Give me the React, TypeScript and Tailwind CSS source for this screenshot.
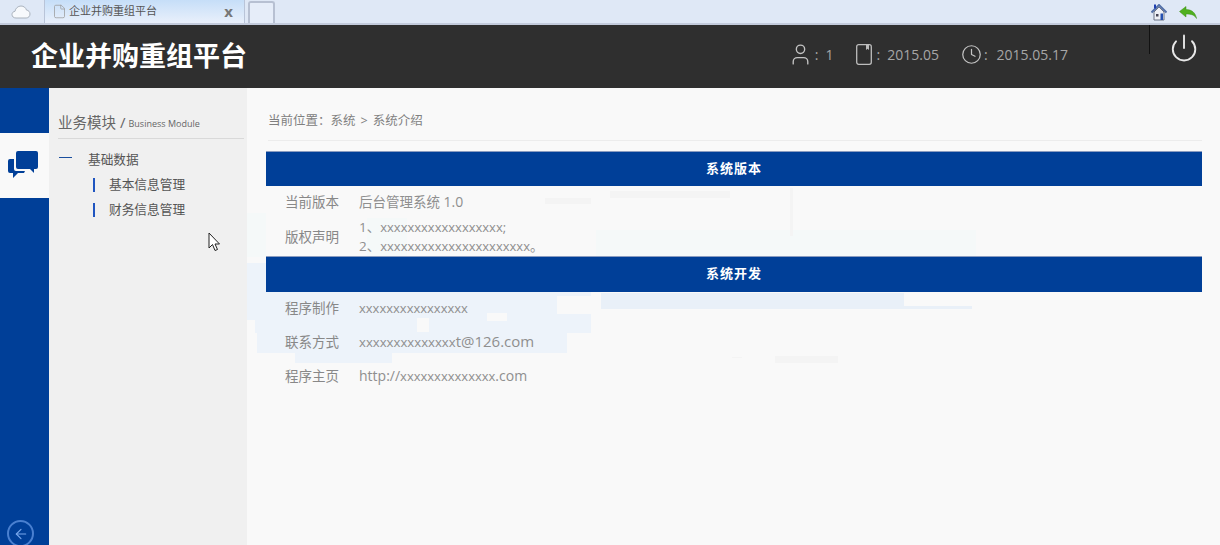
import { ArrowLeft, Clock, File, Power, User } from "lucide-react";

const font = "font-['Open_Sans','Noto_Sans_CJK_SC',sans-serif]";

const Row = ({ label, children, h = "h-[34px]" }: { label: string; children: React.ReactNode; h?: string }) => (
	<div className={`flex items-center pb-[2px] text-[13.500px] leading-[19px] text-[#8f8f8f] ${h}`}>
		<div className="w-[73px] pl-[19px] text-[#888]">{label}</div>
		<div className="ml-[20px]">{children}</div>
	</div>
);

const Banner = ({ title, h = "h-[35px]" }: { title: string; h?: string }) => (
	<div className={`flex items-center justify-center border-t border-[#8a9cc0] bg-[#003f98] text-[13px] font-bold tracking-[1px] text-white ${h}`}>
		{title}
	</div>
);

const Cloud = () => (
	<svg width="20" height="14" viewBox="0 0 20 14" className="text-[#aab2bd]">
		<path
			d="M5 13C2.500 13 1 11.500 1 9.500 1 7.700 2.400 6.400 4 6.300 4.500 3.200 7 1 10 1c2.700 0 4.800 1.700 5.500 4.100 2 .1 3.500 1.900 3.500 3.900 0 2.200-1.600 4-3.800 4z"
			fill="#f7f9fc"
			stroke="currentColor"
		/>
	</svg>
);

const House = () => (
	<svg width="16" height="17" viewBox="0 0 16 17">
		<path d="M3 8v8h10V8L8 3z" fill="#eef0f6" stroke="#6d7486" />
		<path d="M0.500 8.500 8 1l7.500 7.500" fill="none" stroke="#5470a8" strokeWidth="2" />
		<rect x="3" y="0.500" width="2" height="4" fill="#1f3fb0" />
		<rect x="5" y="10" width="2.500" height="2.500" fill="#445" />
		<rect x="9.500" y="9.500" width="2.500" height="6.500" fill="#2450b0" />
	</svg>
);

const GreenArrow = () => (
	<svg width="18" height="13" viewBox="0 0 18 13">
		<path d="M0.500 5.500 7 0.500v3c5.500 0 9.500 3 10.500 9-2-3.500-5-4.500-10.500-4.500v3z" fill="#4fb01f" stroke="#3c8f16" strokeWidth="0.500" />
	</svg>
);

const Chat = () => (
	<svg width="30" height="27" viewBox="0 0 30 27" fill="#003f98">
		<path d="M8 2Q8 0 10 0h18q2 0 2 2v14q0 2-2 2h-2v4l-4-4H10q-2 0-2-2z" />
		<path d="M6 8H2Q0 8 0 10V20Q0 22 2 22H5V27L10 22H16L17 20H8Q6 20 6 18Z" />
	</svg>
);

const Notebook = () => (
	<svg width="16" height="21" viewBox="0 0 16 21" fill="none" stroke="#bdbdbd" strokeWidth="1.300">
		<rect x="0.700" y="0.700" width="14.600" height="19.600" rx="2" />
		<path d="M10 1v5l1.500-1.200L13 6V1" fill="#bdbdbd" stroke="none" />
	</svg>
);

// pale remains of an earlier frame, left in the capture
const Ghosting = () => (
	<svg width="973" height="457" viewBox="0 0 973 457" className="absolute left-0 top-0">
		<g fill="#edf3fa">
			<path d="M0 175h344v70H320v20H145v10H48v-10H10v-20H0z" />
		</g>
		<path d="M354 205h303v13h68v3H354z" fill="#e9f0f8" />
		<g fill="#f9f9f9">
			<rect x="310" y="208" width="34" height="18" />
			<rect x="0" y="232" width="8" height="20" />
			<rect x="240" y="225" width="20" height="8" />
			<rect x="170" y="230" width="12" height="14" />
		</g>
		<g fill="#f5f9f9">
			<rect x="0" y="125" width="19" height="44" />
			<rect x="349" y="142" width="380" height="27" />
			<rect x="120" y="130" width="40" height="39" />
		</g>
		<g fill="#f4f4f4">
			<rect x="363" y="103" width="120" height="7" />
			<rect x="298" y="110" width="46" height="6" />
			<rect x="543" y="100" width="3" height="48" />
			<rect x="485" y="269" width="10" height="1" />
			<rect x="528" y="268" width="63" height="7" />
		</g>
	</svg>
);

export default function App() {
	return (
		<div className={`relative flex h-[545px] w-[1220px] flex-col overflow-hidden bg-[#f9f9f9] ${font}`}>
			{/* browser tab strip */}
			<div className="flex h-[25px] shrink-0 items-end border-b-2 border-[#c3cbdc] bg-[#dfe8f6]">
				<div className="flex h-[23px] w-[44px] items-center pl-[11px]">
					<Cloud />
				</div>
				<div className="flex h-[23px] w-[201px] items-center border-x border-[#b9c4d8] bg-gradient-to-b from-[#c6def8] to-[#e9f0fb] pl-[7px] pr-[11px] text-[11px] text-[#555]">
					<File size={15} strokeWidth={1.2} className="text-[#999]" />
					<span className="ml-[2px] flex-1">企业并购重组平台</span>
					<span className="text-[15px] font-bold leading-none text-[#777]">x</span>
				</div>
				<div className="ml-[3px] h-[22px] w-[27px] rounded-t-[3px] border-x-2 border-t-2 border-[#b7c0d2] bg-[#e6edf9]" />
				<div className="ml-auto flex items-center gap-[12px] pb-[2px] pr-[23px]">
					<House />
					<GreenArrow />
				</div>
			</div>

			{/* header */}
			<div className="flex h-[63px] shrink-0 items-start bg-[#2f2f2f]">
				<div className="ml-[31px] mt-[12px] text-[27px] font-bold leading-[38px] text-white">企业并购重组平台</div>
				<div className="ml-auto mt-[17px] flex items-center text-[14px] leading-[24px] text-[#a6a6a6]">
					<User size={25} strokeWidth={1.3} className="text-[#c4c4c4]" />
					<span className="ml-[2px]">:</span>
					<span className="ml-[7px]">1</span>
					<span className="ml-[22px]">
						<Notebook />
					</span>
					<span className="ml-[5px]">:</span>
					<span className="ml-[7px]">2015.05</span>
					<Clock size={21} strokeWidth={1.4} className="ml-[22px] text-[#c4c4c4]" />
					<span className="ml-[2px]">:</span>
					<span className="ml-[9px]">2015.05.17</span>
				</div>
				<div className="ml-[81px] h-[29px] w-px bg-[#111]" />
				<div className="ml-[19px] mt-[8px] mr-[21px]">
					<Power size={30} strokeWidth={1.5} className="text-[#e8e8e8]" />
				</div>
			</div>

			<div className="flex min-h-0 flex-1">
				{/* icon rail */}
				<div className="flex w-[49px] shrink-0 flex-col bg-[#003f98] pt-[45px]">
					<div className="flex h-[65px] items-center justify-center bg-[#f9f9f9] pb-[3px] pr-[4px]">
						<Chat />
					</div>
					<div className="mt-auto -mb-[2px] ml-[7px] flex h-[27px] w-[27px] items-center justify-center rounded-full border-2 border-[#4a80d0]">
						<ArrowLeft size={16} strokeWidth={1.7} className="text-[#78a8ec]" />
					</div>
				</div>

				{/* module menu */}
				<div className="w-[198px] shrink-0 bg-[#f0f0f0] pl-[9px] pr-[3px] pt-[24px]">
					<div className="flex h-[27px] items-start border-b border-[#d9d9d9] text-[#666]">
						<span className="text-[14.500px] leading-[21px]">业务模块</span>
						<span className="ml-[4px] text-[15px] leading-[21px]">/</span>
						<span className="ml-[3px] mt-[3px] text-[9px] leading-[18px]">Business Module</span>
					</div>
					<div className="mt-[8px] flex h-[25px] items-center text-[12.700px] text-[#555]">
						<span className="-mt-[4px] ml-[1px] h-[1.500px] w-[13px] bg-[#1a4f9e]" />
						<span className="ml-[16px]">基础数据</span>
					</div>
					<div className="flex h-[25px] items-center pl-[35px] text-[12.700px] text-[#555]">
						<span className="h-[14px] w-[2px] bg-[#1f55c0]" />
						<span className="ml-[14px]">基本信息管理</span>
					</div>
					<div className="flex h-[25px] items-center pl-[35px] text-[12.700px] text-[#555]">
						<span className="h-[14px] w-[2px] bg-[#1f55c0]" />
						<span className="ml-[14px]">财务信息管理</span>
					</div>
				</div>

				{/* content */}
				<div className="relative min-w-0 flex-1 pl-[19px] pr-[18px]">
					<Ghosting />

					<div className="relative">
						<div className="ml-[2px] flex h-[53px] items-end border-b border-[#ececec] pb-[11px] text-[12.500px] leading-[17px] text-[#808080]">
							<span>当前位置：系统</span>
							<span className="mx-[5px]">&gt;</span>
							<span>系统介绍</span>
						</div>
						<div className="mt-[10px]">
							<Banner title="系统版本" />
							<Row label="当前版本">
								后台管理系统 <span className="text-[14px]">1.0</span>
							</Row>
							<Row label="版权声明" h="h-[36px]">
								<div>1、<span className="text-[13px]">xxxxxxxxxxxxxxxxxx;</span></div>
								<div>2、<span className="text-[13px]">xxxxxxxxxxxxxxxxxxxxxx</span>。</div>
							</Row>
							<Banner title="系统开发" h="h-[36px] pb-[2px]" />
							<Row label="程序制作">
								<span className="text-[13px]">xxxxxxxxxxxxxxxx</span>
							</Row>
							<Row label="联系方式">
								<span className="text-[13.200px]">xxxxxxxxxxxxxx</span>
								<span className="text-[15px]">t@126.com</span>
							</Row>
							<Row label="程序主页">
								<span className="text-[14px]">http://</span>
								<span className="text-[13px]">xxxxxxxxxxxxxx</span>
								<span className="text-[14px]">.com</span>
							</Row>
						</div>
					</div>
				</div>
			</div>

			{/* mouse pointer caught in the capture */}
			<svg width="13" height="20" viewBox="0 0 13 20" className="absolute left-[208px] top-[232px]">
				<path d="M1 1v15l3.500-3.500L7 18.500l2.500-1-2.500-5.500h4.500z" fill="#fff" stroke="#222" strokeWidth="1" />
			</svg>
		</div>
	);
}
